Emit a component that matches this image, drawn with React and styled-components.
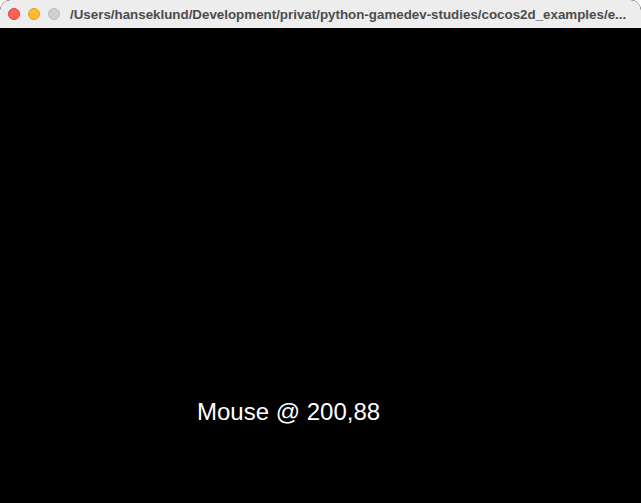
import styled, { createGlobalStyle } from 'styled-components'

const GlobalStyle = createGlobalStyle`
  html, body {
    margin: 0;
    padding: 0;
    background: #ffffff;
  }
`

export default function App() {
  return (
    <>
      <GlobalStyle />
      <Window>
        <TitleBar>
          <Lights>
            <Light color='#fe5f57' border='#e0443e' />
            <Light color='#febc2e' border='#dea123' />
            <Light color='#d0d0d0' border='#b9b9b9' />
          </Lights>
          <Title>/Users/hanseklund/Development/privat/python-gamedev-studies/cocos2d_examples/e...</Title>
        </TitleBar>
        <Canvas>
          <Label>Mouse @ 200,88</Label>
        </Canvas>
      </Window>
    </>
  )
}

const Window = styled.div`
  width: 641px;
  height: 503px;
  display: flex;
  flex-direction: column;
  background: #000;
  border-top-left-radius: 10px;
  border-top-right-radius: 10px;
  overflow: hidden;
`

const TitleBar = styled.div`
  height: 28px;
  flex-shrink: 0;
  display: flex;
  align-items: center;
  padding-left: 8px;
  background: #ededed;
  border-top-left-radius: 10px;
  border-top-right-radius: 10px;
  box-sizing: border-box;
`

const Lights = styled.div`
  display: flex;
  gap: 8px;
`

const Light = styled.span`
  width: 12px;
  height: 12px;
  border-radius: 50%;
  box-sizing: border-box;
  background: ${(p) => p.color};
  border: 0.5px solid ${(p) => p.border};
`

const Title = styled.div`
  margin-left: 10px;
  font-family: 'Liberation Sans', Arial, sans-serif;
  font-weight: bold;
  font-size: 13.35px;
  color: #4c4c4c;
  white-space: nowrap;
`

const Canvas = styled.div`
  position: relative;
  flex: 1;
  background: #000;
`

const Label = styled.div`
  position: absolute;
  left: 197px;
  top: 370px;
  font-family: 'Liberation Sans', Arial, sans-serif;
  font-size: 24px;
  line-height: 28px;
  color: #ffffff;
  white-space: nowrap;
`
